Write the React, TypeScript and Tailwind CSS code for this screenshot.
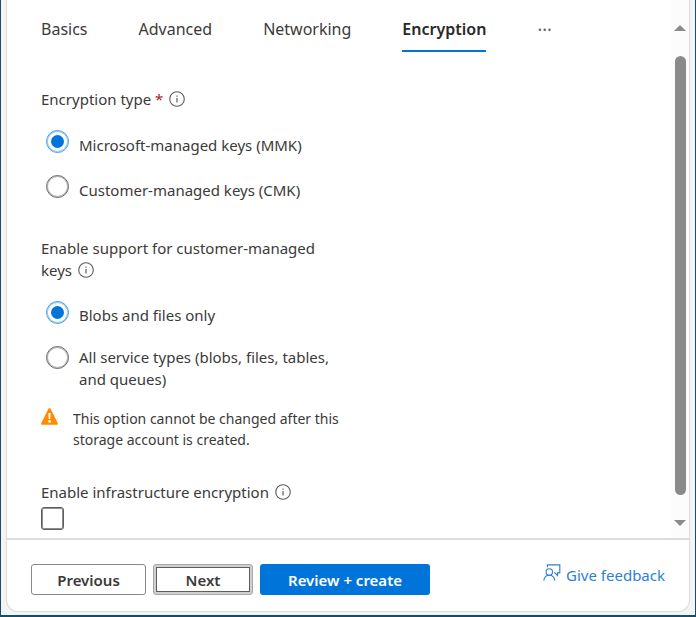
import { useState } from "react";
import type { ReactNode } from "react";

const tabs = ["Basics", "Advanced", "Networking", "Encryption"];

function InfoIcon() {
  return (
    <svg
      className="h-4 w-4 shrink-0"
      viewBox="0 0 16 16"
      fill="none"
      stroke="#605e5c"
      aria-hidden
    >
      <circle cx="8" cy="8" r="7.3" strokeWidth="1.1" />
      <path d="M8 6.9v4.6" strokeWidth="1.2" />
      <path d="M8 4.4v1.3" strokeWidth="1.2" />
    </svg>
  );
}

function WarningIcon() {
  return (
    <svg className="h-[17px] w-[17px] shrink-0" viewBox="0 0 17 17" aria-hidden>
      <path
        d="M7.3.9Q8.5-.8 9.7.9L16.7 15q.7 1.8-1 1.8H1.3q-1.7 0-1-1.8Z"
        fill="#ff8c00"
      />
      <path d="M7.4 5h2.2l-.3 6H7.7Z" fill="#fff" />
      <circle cx="8.5" cy="13.4" r="1.3" fill="#fff" />
    </svg>
  );
}

function FeedbackIcon() {
  return (
    <svg
      className="h-[17px] w-[18px] shrink-0"
      viewBox="0 0 18 17"
      fill="none"
      stroke="#2b7fd6"
      strokeWidth="1.1"
      aria-hidden
    >
      <circle cx="6.3" cy="8" r="3.2" />
      <path d="M.8 16.6c.4-3.2 2.6-5.4 5.5-5.4s5.1 2.2 5.5 5.4" />
      <path d="M4.4 3.2V.9h12.4v8h-2.3v2.6l-2.7-2.6h-.7" />
    </svg>
  );
}

type RadioProps = {
  name: string;
  checked: boolean;
  onChange: () => void;
  children: ReactNode;
  labelClass: string;
};

function Radio({ name, checked, onChange, children, labelClass }: RadioProps) {
  return (
    <label className="flex items-start gap-[10px]">
      <input
        type="radio"
        name={name}
        checked={checked}
        onChange={onChange}
        className="grid h-[23px] w-[23px] shrink-0 appearance-none place-items-center rounded-full border border-[#6a6968] shadow-[inset_0_0_0_1px_#b4b3b2] before:h-[13px] before:w-[13px] before:rounded-full checked:border-[#4a9ce2] checked:shadow-[inset_0_0_0_1px_#9ccaf0] checked:before:bg-[#0074d9]"
      />
      <span className={labelClass}>{children}</span>
    </label>
  );
}

export default function App() {
  const [tab, setTab] = useState("Encryption");
  const [keyType, setKeyType] = useState("mmk");
  const [support, setSupport] = useState("blobs");

  return (
    <div className="flex min-h-screen flex-col border-x border-b-2 border-[#11506b] bg-[#f4f4f4] px-[5px] pb-[3px] font-['Noto_Sans','Open_Sans',sans-serif] text-[15px] leading-[22px] text-[#3b3a39]">
      <div className="flex flex-1 flex-col rounded-b-xl border border-t-0 border-[#dcdcdc] bg-white">
        <div className="flex">
          <main className="min-w-0 flex-1 pt-[18px] pb-2 pl-[34px]">
            <nav className="flex items-start gap-[51px] text-base leading-[22px]">
              {tabs.map((t) => (
                <button
                  key={t}
                  type="button"
                  onClick={() => setTab(t)}
                  className={
                    t === tab
                      ? "border-b-2 border-[#0074d9] pb-[10px] font-semibold text-[#292827]"
                      : "border-b-2 border-transparent pb-[10px]"
                  }
                >
                  {t}
                </button>
              ))}
              <button
                type="button"
                aria-label="More tabs"
                className="text-lg leading-[22px] text-[#605e5c]"
              >
                ···
              </button>
            </nav>

            <fieldset className="mt-9">
              <legend className="flex items-center gap-[6px]">
                <span>
                  Encryption type <span className="text-[#a4262c]">*</span>
                </span>
                <InfoIcon />
              </legend>
              <div className="mt-5 flex flex-col gap-[19px] pl-[5px]">
                <Radio
                  name="keyType"
                  checked={keyType === "mmk"}
                  onChange={() => setKeyType("mmk")}
                  labelClass="pt-1"
                >
                  Microsoft-managed keys (MMK)
                </Radio>
                <Radio
                  name="keyType"
                  checked={keyType === "cmk"}
                  onChange={() => setKeyType("cmk")}
                  labelClass="pt-1"
                >
                  Customer-managed keys (CMK)
                </Radio>
              </div>
            </fieldset>

            <fieldset className="mt-9">
              <legend>
                Enable support for customer-managed
                <br />
                <span className="flex items-center gap-[6px]">
                  keys <InfoIcon />
                </span>
              </legend>
              <div className="mt-5 flex flex-col gap-5 pl-[5px]">
                <Radio
                  name="support"
                  checked={support === "blobs"}
                  onChange={() => setSupport("blobs")}
                  labelClass="pt-[3px]"
                >
                  Blobs and files only
                </Radio>
                <Radio
                  name="support"
                  checked={support === "all"}
                  onChange={() => setSupport("all")}
                  labelClass="max-w-[270px]"
                >
                  All service types (blobs, files, tables, and queues)
                </Radio>
              </div>
            </fieldset>

            <p className="mt-[18px] flex items-start gap-[15px] text-sm leading-[21px]">
              <WarningIcon />
              <span className="max-w-[280px]">
                This option cannot be changed after this storage account is
                created.
              </span>
            </p>

            <div className="mt-[31px] flex flex-col gap-1">
              <label htmlFor="infra" className="flex items-center gap-[6px]">
                Enable infrastructure encryption <InfoIcon />
              </label>
              <input
                id="infra"
                type="checkbox"
                className="h-[23px] w-[23px] appearance-none rounded-[3px] border border-[#5e5d5c] shadow-[inset_0_0_0_1px_#8f8e8d] checked:bg-[#0074d9]"
              />
            </div>
          </main>

          {/* scrollbar */}
          <div className="flex w-[18px] shrink-0 flex-col items-center bg-[#fcfcfc] pt-[25px] pb-3">
            <svg className="h-[6px] w-3" viewBox="0 0 12 6" aria-hidden>
              <path d="M6 0l6 6H0Z" fill="#8a8a8a" />
            </svg>
            <div className="my-[25px] w-[11px] flex-1 rounded-full bg-[#8a8a8a]" />
            <svg className="h-[6px] w-3" viewBox="0 0 12 6" aria-hidden>
              <path d="M0 0h12L6 6Z" fill="#8a8a8a" />
            </svg>
          </div>
        </div>

        <footer className="flex flex-1 items-start gap-[7px] border-t-2 border-[#dcdcdc] pt-6 pr-6 pl-6 font-semibold">
          <button
            type="button"
            className="h-[31px] w-[115px] rounded-[3px] border border-[#8a8886]"
          >
            Previous
          </button>
          <button
            type="button"
            className="h-[31px] w-[100px] rounded-[3px] border border-[#a8a8a8] bg-[#d0d0d0] p-[2px]"
          >
            <span className="flex h-full items-center justify-center border border-[#605e5c] bg-white">
              Next
            </span>
          </button>
          <button
            type="button"
            className="h-[31px] w-[170px] rounded-[3px] bg-[#0074d9] text-white"
          >
            Review + create
          </button>
          <a
            href="#feedback"
            className="ml-auto flex items-start gap-[5px] font-normal text-[#2b7fd6]"
          >
            <FeedbackIcon />
            Give feedback
          </a>
        </footer>
      </div>
    </div>
  );
}
